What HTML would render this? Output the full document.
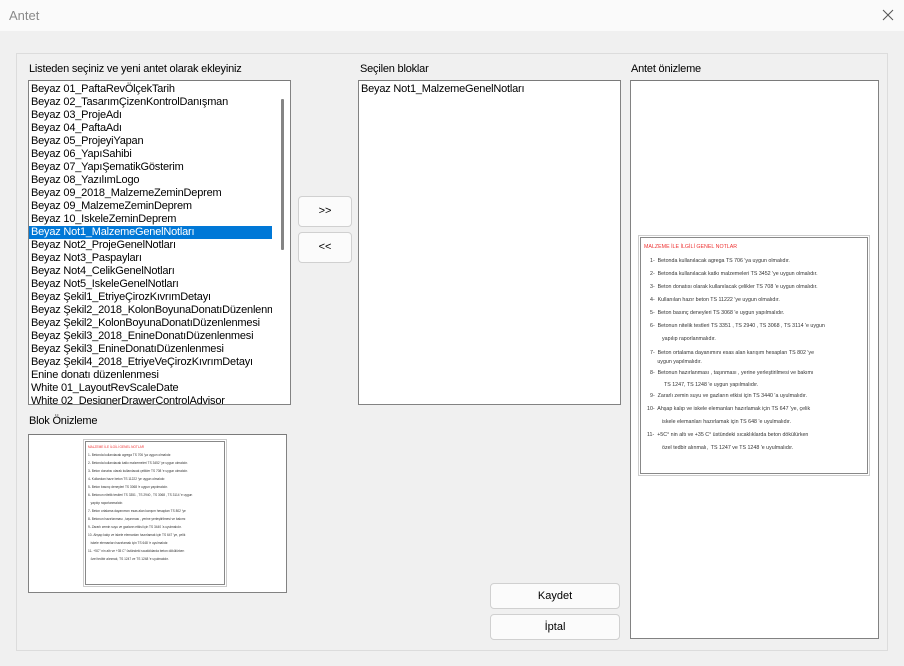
<!DOCTYPE html>
<html><head><meta charset="utf-8"><style>
*{margin:0;padding:0;box-sizing:border-box}
body{width:904px;height:666px;background:#f0f0f0;font-family:"Liberation Sans",sans-serif;font-size:12px;color:#000;position:relative;overflow:hidden}
.a{position:absolute}
.title{left:0;top:0;width:904px;height:31px;background:#fafafa;}
.title span{position:absolute;left:9px;top:8px;font-size:13px;color:#8a8a8a}
.grp{left:16px;top:53px;width:872px;height:598px;border:1px solid #dcdcdc}
.box{background:#fff;border:1px solid #828282;border-top-color:#7a7a7a}
.row{position:absolute;left:0;height:13px;line-height:13px;font-size:11px;letter-spacing:-0.2px;padding-left:2px;white-space:nowrap}
.sel{background:#0078d7;color:#fff;width:243px}
.btn{background:#fbfbfb;border:1px solid #d0d0d0;border-radius:4px;text-align:center;font-size:11px}
.lbl{font-size:11px;letter-spacing:-0.2px}
.doc{background:#fff;border:1px solid #888;outline:1px solid #ccc;outline-offset:1px;overflow:hidden}
.doc div{white-space:nowrap;color:#333}
</style></head><body>
<div class="a title"><span>Antet</span>
<svg class="a" style="left:882px;top:9px" width="12" height="12"><path d="M1 1L11 11M11 1L1 11" stroke="#555" stroke-width="1"/></svg></div>
<div class="a grp"></div>

<div class="a lbl" style="left:29px;top:63px">Listeden seçiniz ve yeni antet olarak ekleyiniz</div>
<div class="a lbl" style="left:360px;top:63px">Seçilen bloklar</div>
<div class="a lbl" style="left:631px;top:63px">Antet önizleme</div>
<div class="a lbl" style="left:29px;top:415px">Blok Önizleme</div>

<div class="a box" style="left:28px;top:80px;width:263px;height:325px;overflow:hidden">
<div class="a" style="left:0;top:2px;width:262px;height:322px">
<div class="row" style="top:0">Beyaz 01_PaftaRevÖlçekTarih</div>
<div class="row" style="top:13px">Beyaz 02_TasarımÇizenKontrolDanışman</div>
<div class="row" style="top:26px">Beyaz 03_ProjeAdı</div>
<div class="row" style="top:39px">Beyaz 04_PaftaAdı</div>
<div class="row" style="top:52px">Beyaz 05_ProjeyiYapan</div>
<div class="row" style="top:65px">Beyaz 06_YapıSahibi</div>
<div class="row" style="top:78px">Beyaz 07_YapıŞematikGösterim</div>
<div class="row" style="top:91px">Beyaz 08_YazılımLogo</div>
<div class="row" style="top:104px">Beyaz 09_2018_MalzemeZeminDeprem</div>
<div class="row" style="top:117px">Beyaz 09_MalzemeZeminDeprem</div>
<div class="row" style="top:130px">Beyaz 10_IskeleZeminDeprem</div>
<div class="row sel" style="top:143px">Beyaz Not1_MalzemeGenelNotları</div>
<div class="row" style="top:156px">Beyaz Not2_ProjeGenelNotları</div>
<div class="row" style="top:169px">Beyaz Not3_Paspayları</div>
<div class="row" style="top:182px">Beyaz Not4_CelikGenelNotları</div>
<div class="row" style="top:195px">Beyaz Not5_IskeleGenelNotları</div>
<div class="row" style="top:208px">Beyaz Şekil1_EtriyeÇirozKıvrımDetayı</div>
<div class="row" style="top:221px;width:243px;overflow:hidden">Beyaz Şekil2_2018_KolonBoyunaDonatıDüzenlenmesi</div>
<div class="row" style="top:234px">Beyaz Şekil2_KolonBoyunaDonatıDüzenlenmesi</div>
<div class="row" style="top:247px">Beyaz Şekil3_2018_EnineDonatıDüzenlenmesi</div>
<div class="row" style="top:260px">Beyaz Şekil3_EnineDonatıDüzenlenmesi</div>
<div class="row" style="top:273px">Beyaz Şekil4_2018_EtriyeVeÇirozKıvrımDetayı</div>
<div class="row" style="top:286px">Enine donatı düzenlenmesi</div>
<div class="row" style="top:299px">White 01_LayoutRevScaleDate</div>
<div class="row" style="top:312px">White 02_DesignerDrawerControlAdvisor</div>
</div>
<div class="a" style="left:244px;top:0;width:18px;height:323px;background:#fff"></div>
<div class="a" style="left:252px;top:18px;width:3px;height:151px;background:#858585;border-radius:1px"></div>
</div>

<div class="a btn" style="left:298px;top:196px;width:54px;height:31px;line-height:29px">&gt;&gt;</div>
<div class="a btn" style="left:298px;top:232px;width:54px;height:31px;line-height:29px">&lt;&lt;</div>

<div class="a box" style="left:358px;top:80px;width:263px;height:325px">
<div class="row" style="top:2px">Beyaz Not1_MalzemeGenelNotları</div></div>

<div class="a box" style="left:630px;top:80px;width:249px;height:559px"></div>
<div class="a doc" style="left:640px;top:237px;width:228px;height:237px;font-size:5.3px;padding:6px 0 0 3px;line-height:13px">
<div style="color:#e33;line-height:7px;margin-bottom:4px">MALZEME İLE İLGİLİ GENEL NOTLAR</div>
<div style="padding-left:6px">1-&nbsp; Betonda kullanılacak agrega TS 706 'ya uygun olmalıdır.</div>
<div style="padding-left:6px">2-&nbsp; Betonda kullanılacak katkı malzemeleri TS 3452 'ye uygun olmalıdır.</div>
<div style="padding-left:6px">3-&nbsp; Beton donatısı olarak kullanılacak çelikler TS 708 'e uygun olmalıdır.</div>
<div style="padding-left:6px">4-&nbsp; Kullanılan hazır beton TS 11222 'ye uygun olmalıdır.</div>
<div style="padding-left:6px">5-&nbsp; Beton basınç deneyleri TS 3068 'e uygun yapılmalıdır.</div>
<div style="padding-left:6px">6-&nbsp; Betonun nitelik testleri TS 3351 , TS 2940 , TS 3068 , TS 3114 'e uygun</div>
<div style="padding-left:18px">yapılıp raporlanmalıdır.</div>
<div style="padding-left:6px;line-height:9px;margin-top:3px">7-&nbsp; Beton ortalama dayanımını esas alan karışım hesapları TS 802 'ye<br>&nbsp;&nbsp;&nbsp;&nbsp;&nbsp;uygun yapılmalıdır.</div>
<div style="padding-left:6px">8-&nbsp; Betonun hazırlanması , taşınması , yerine yerleştirilmesi ve bakımı</div>
<div style="padding-left:20px;line-height:10px">TS 1247, TS 1248 'e uygun yapılmalıdır.</div>
<div style="padding-left:6px">9-&nbsp; Zararlı zemin suyu ve gazların etkisi için TS 3440 'a uyulmalıdır.</div>
<div style="padding-left:3px">10-&nbsp; Ahşap kalıp ve iskele elemanları hazırlamak için TS 647 'ye, çelik</div>
<div style="padding-left:18px">iskele elemanları hazırlamak için TS 648 'e uyulmalıdır.</div>
<div style="padding-left:3px">11-&nbsp; +5C° nin altı ve +35 C° üstündeki sıcaklıklarda beton dökülürken</div>
<div style="padding-left:18px">özel tedbir alınmalı,&nbsp; TS 1247 ve TS 1248 'e uyulmalıdır.</div>
</div>

<div class="a box" style="left:28px;top:434px;width:259px;height:159px"></div>
<div class="a doc" style="left:85px;top:441px;width:140px;height:144px;font-size:3.2px;padding:3px 0 0 2px;line-height:8px">
<div style="color:#e33;line-height:4px;margin-bottom:2px">MALZEME İLE İLGİLİ GENEL NOTLAR</div>
<div>1- Betonda kullanılacak agrega TS 706 'ya uygun olmalıdır.</div>
<div>2- Betonda kullanılacak katkı malzemeleri TS 3452 'ye uygun olmalıdır.</div>
<div>3- Beton donatısı olarak kullanılacak çelikler TS 708 'e uygun olmalıdır.</div>
<div>4- Kullanılan hazır beton TS 11222 'ye uygun olmalıdır.</div>
<div>5- Beton basınç deneyleri TS 3068 'e uygun yapılmalıdır.</div>
<div>6- Betonun nitelik testleri TS 3351 , TS 2940 , TS 3068 , TS 3114 'e uygun</div>
<div>&nbsp;&nbsp;&nbsp;yapılıp raporlanmalıdır.</div>
<div>7- Beton ortalama dayanımını esas alan karışım hesapları TS 802 'ye</div>
<div>8- Betonun hazırlanması , taşınması , yerine yerleştirilmesi ve bakımı</div>
<div>9- Zararlı zemin suyu ve gazların etkisi için TS 3440 'a uyulmalıdır.</div>
<div>10- Ahşap kalıp ve iskele elemanları hazırlamak için TS 647 'ye, çelik</div>
<div>&nbsp;&nbsp;&nbsp;iskele elemanları hazırlamak için TS 648 'e uyulmalıdır.</div>
<div>11- +5C° nin altı ve +35 C° üstündeki sıcaklıklarda beton dökülürken</div>
<div>&nbsp;&nbsp;&nbsp;özel tedbir alınmalı, TS 1247 ve TS 1248 'e uyulmalıdır.</div>
</div>

<div class="a btn" style="left:490px;top:583px;width:130px;height:26px;line-height:24px">Kaydet</div>
<div class="a btn" style="left:490px;top:614px;width:130px;height:26px;line-height:24px">İptal</div>
</body></html>
